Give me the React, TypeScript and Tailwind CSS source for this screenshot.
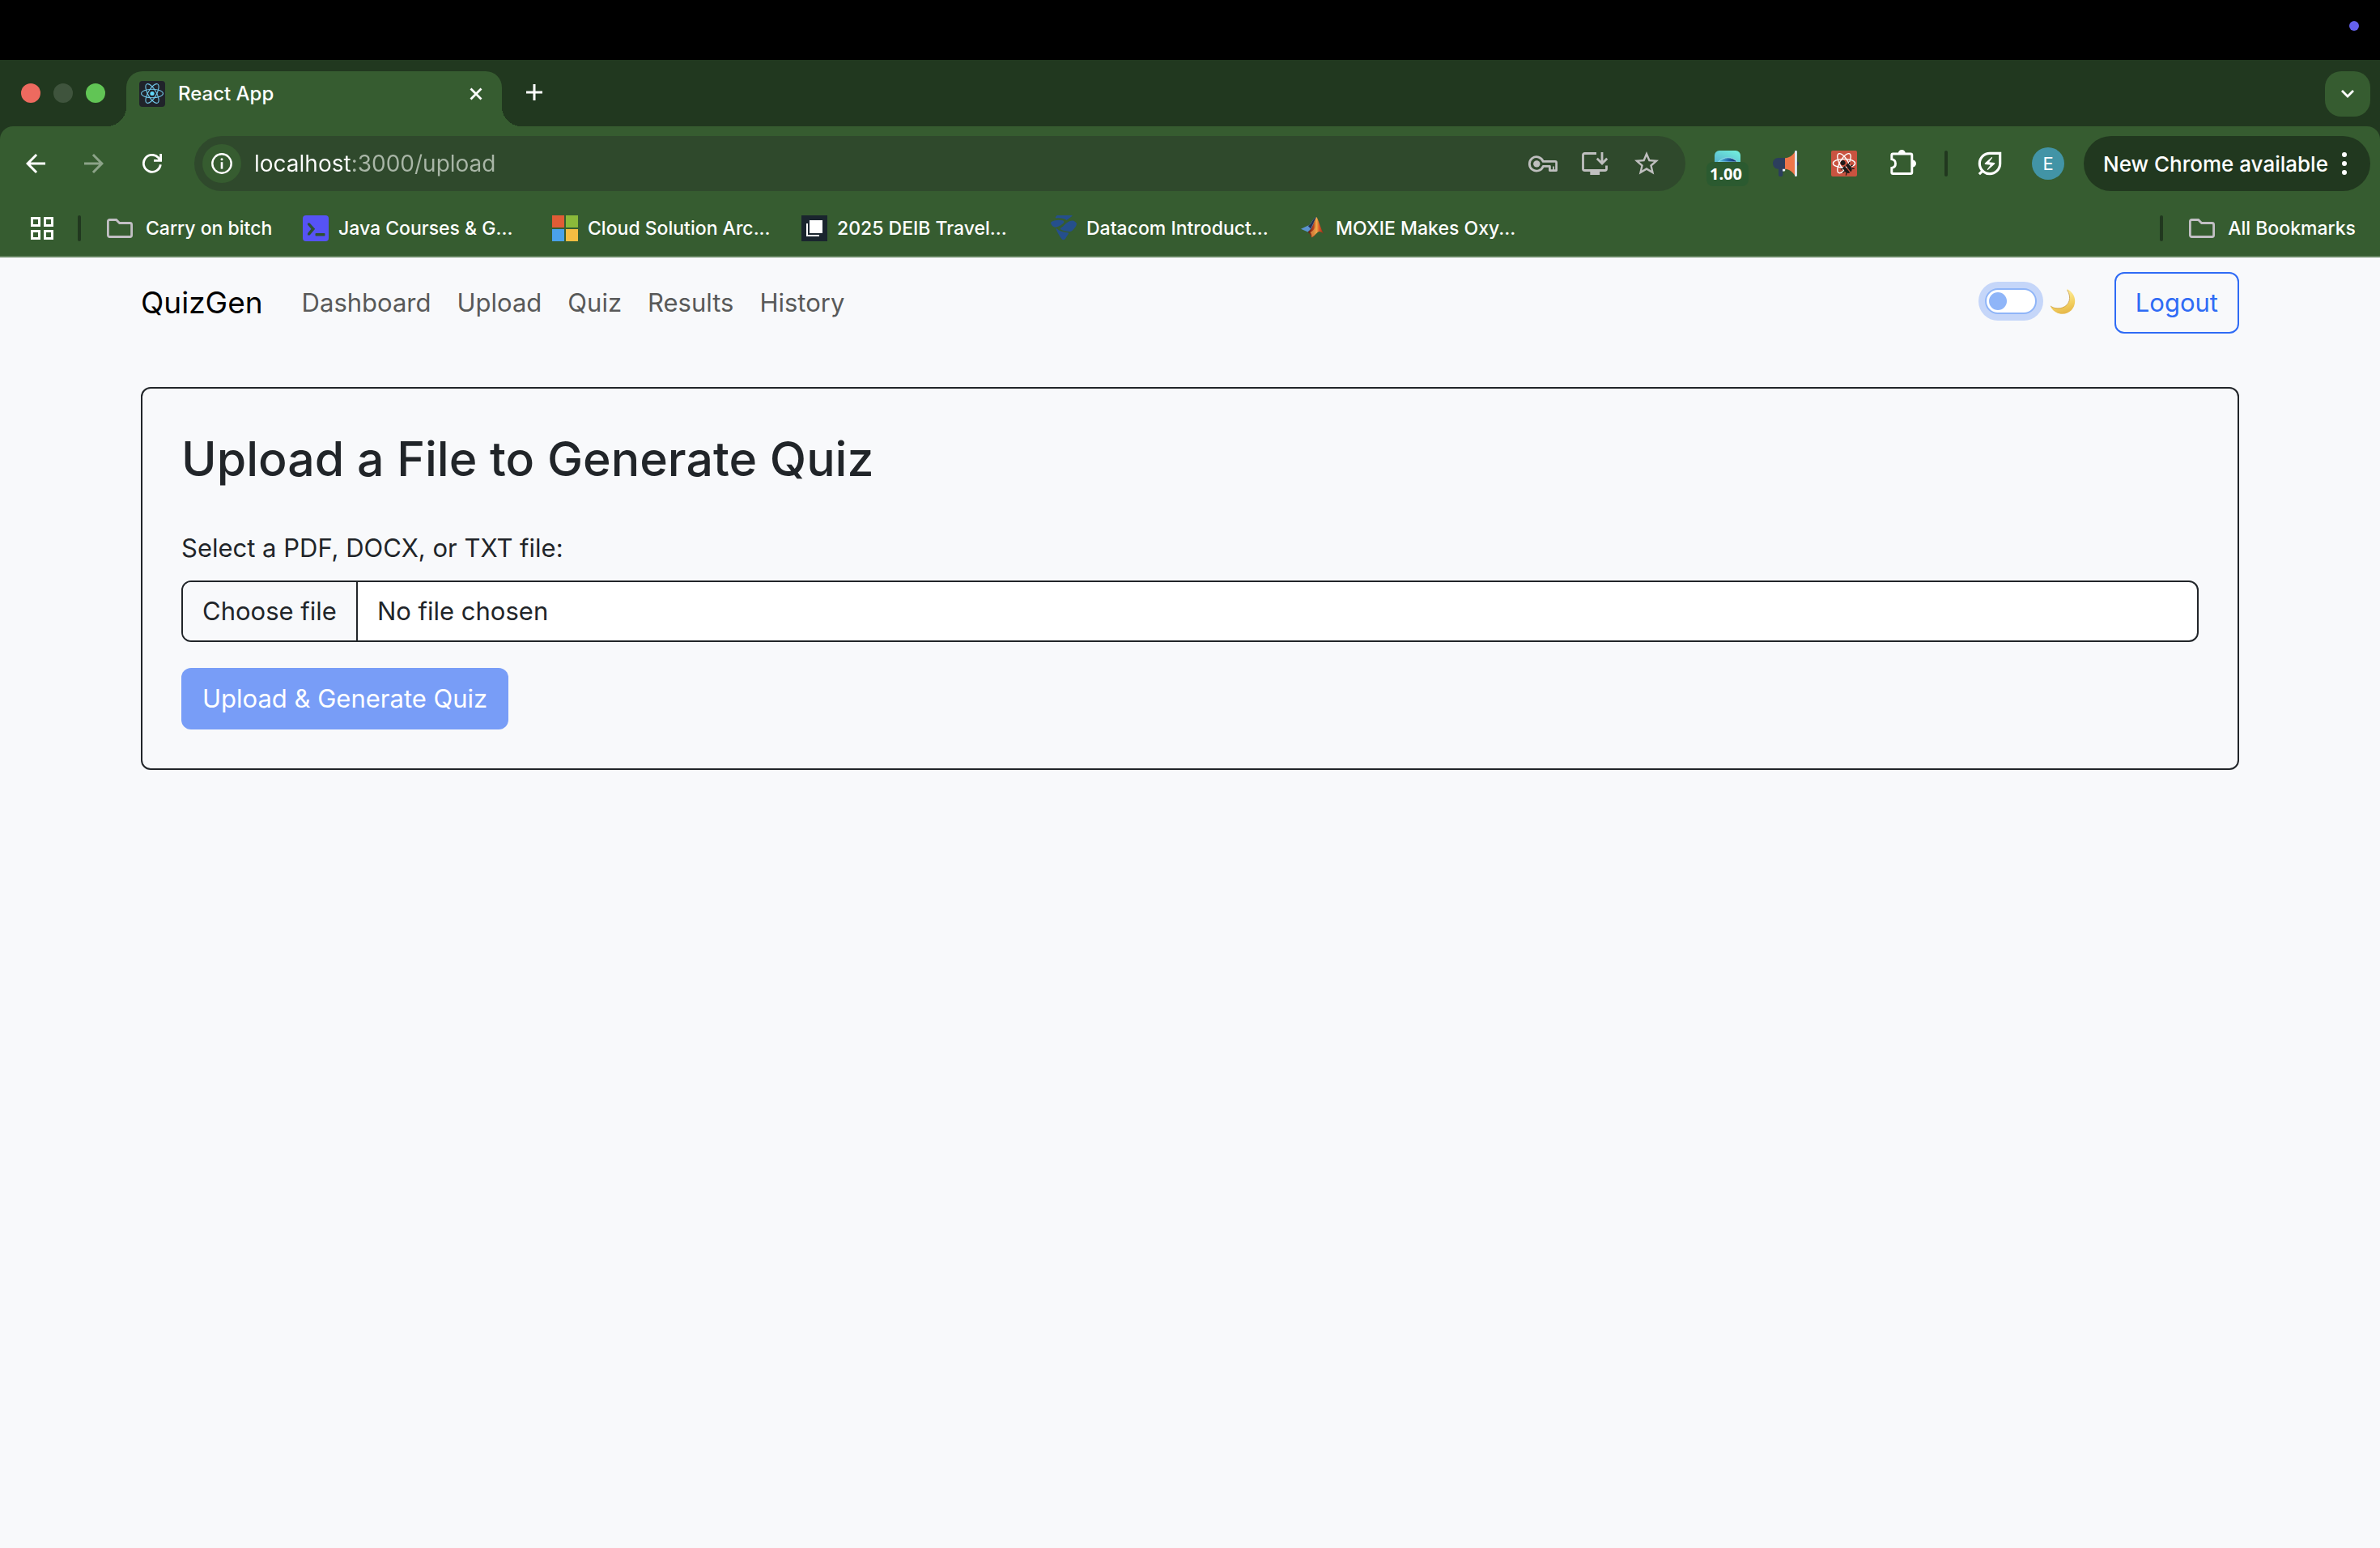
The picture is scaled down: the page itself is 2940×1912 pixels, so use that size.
import React, { useState } from "react";
import {
  MdArrowBack,
  MdArrowForward,
  MdOutlineEnergySavingsLeaf,
  MdStarBorder,
} from "react-icons/md";

function ReactFavicon() {
  return (
    <svg viewBox="0 0 32 32" className="size-8 shrink-0" aria-hidden="true">
      <rect width="32" height="32" rx="4" fill="#20232a" />
      <circle cx="16" cy="15.5" r="2.6" fill="#61dafb" />
      <g fill="none" stroke="#71c7e8" strokeWidth="1.1">
        <ellipse cx="16" cy="15.5" rx="13.4" ry="5.2" />
        <ellipse cx="16" cy="15.5" rx="13.4" ry="5.2" transform="rotate(60 16 15.5)" />
        <ellipse cx="16" cy="15.5" rx="13.4" ry="5.2" transform="rotate(120 16 15.5)" />
      </g>
    </svg>
  );
}

function CloseIcon() {
  return (
    <svg viewBox="0 0 16 16" className="size-4" aria-hidden="true">
      <path d="M1.5 1.5l13 13M14.5 1.5l-13 13" stroke="#fff" strokeWidth="2.8" fill="none" />
    </svg>
  );
}

function PlusIcon() {
  return (
    <svg viewBox="0 0 20 20" className="size-5" aria-hidden="true">
      <path d="M10 0v20M0 10h20" stroke="#fff" strokeWidth="3" fill="none" />
    </svg>
  );
}

function ChevronIcon() {
  return (
    <svg viewBox="0 0 16 10" className="h-2.5 w-4" aria-hidden="true">
      <path d="M1 1l7 7 7-7" stroke="#fff" strokeWidth="2.8" fill="none" />
    </svg>
  );
}

function ReloadIcon() {
  return (
    <svg viewBox="0 0 24 24" className="size-6" aria-hidden="true">
      <path d="M22.3 13.2a10.5 10.5 0 1 1-2.6-8.4l2 2.6" stroke="#fff" strokeWidth="2.8" fill="none" />
      <path d="M22.6 0v8.4H14" stroke="#fff" strokeWidth="2.8" fill="none" />
    </svg>
  );
}

function InfoIcon() {
  return (
    <svg viewBox="0 0 26 26" className="size-[26px]" aria-hidden="true">
      <circle cx="13" cy="13" r="11.7" stroke="#fff" strokeWidth="2.4" fill="none" />
      <circle cx="13" cy="7.8" r="1.5" fill="#fff" />
      <path d="M13 11.2v8.4" stroke="#fff" strokeWidth="2.6" />
    </svg>
  );
}

function KeyIcon() {
  return (
    <svg viewBox="0 0 36 21" className="h-[21px] w-9" aria-hidden="true">
      <g fill="none" stroke="#bfbfbf" strokeWidth="2.8">
        <path d="M18.2 7.4h14.9a1.5 1.5 0 0 1 1.5 1.5v9.7h-8.2v-5.2h-8.2a8.7 8.7 0 1 1 0-6z" strokeLinejoin="round" />
        <path d="M31 13.4v5" strokeWidth="1.8" />
      </g>
      <circle cx="10.3" cy="10.4" r="4.2" fill="#bfbfbf" />
    </svg>
  );
}

function InstallIcon() {
  return (
    <svg viewBox="0 0 32 28" className="h-7 w-8" aria-hidden="true">
      <g fill="none" stroke="#bfbfbf" strokeWidth="2.8">
        <path d="M18 1.5H3.5a2 2 0 0 0-2 2v17a2 2 0 0 0 2 2h25a2 2 0 0 0 2-2V16.5" />
        <path d="M25 0v13M18.8 7.8l6.2 6.2 6.2-6.2" />
      </g>
      <path d="M10.3 23h11.8v5H10.3z" fill="#bfbfbf" />
    </svg>
  );
}

function EyeTile() {
  return (
    <svg viewBox="0 0 32 14" className="h-3.5 w-8" aria-hidden="true">
      <defs>
        <linearGradient id="tile" x1="0" y1="1" x2="1" y2="0">
          <stop offset="0" stopColor="#58b4cf" />
          <stop offset="1" stopColor="#74f3dd" />
        </linearGradient>
        <linearGradient id="iris" x1="0" y1="0" x2="1" y2="0">
          <stop offset="0" stopColor="#5fd0e6" />
          <stop offset="0.55" stopColor="#1f63a8" />
          <stop offset="1" stopColor="#14245c" />
        </linearGradient>
      </defs>
      <path d="M0 14V6a6 6 0 0 1 6-6h20a6 6 0 0 1 6 6v8z" fill="url(#tile)" />
      <path d="M4.500 14C8 10.500 12 8.800 16.500 8.800S25 10.500 28 14z" fill="url(#iris)" stroke="#a8e6ef" strokeWidth="0.8" />
    </svg>
  );
}

function MegaphoneIcon() {
  return (
    <svg viewBox="0 0 32 32" className="size-8" aria-hidden="true">
      <path d="M29.500 13.500c1.600 0 2.500 1.200 2.500 2.600s-.9 2.700-2.500 2.700z" fill="#2c3e5d" />
      <path d="M7 20h5.300v10.200c0 1-.9 1.800-2.600 1.800s-2.700-.8-2.700-1.800z" fill="#2c3e5d" />
      <path d="M12 22h3.200v2.400c0 .8-1 1.200-3.200 1.200z" fill="#e8eef5" />
      <path d="M15.300 9H6.800C2.400 9 0 12.200 0 15.800s2.400 7 6.800 7h8.500z" fill="#2c3e5d" />
      <path d="M15 9.300c5.600-.6 9.400-3.300 12.300-8.100v29.600c-2.900-4.600-6.700-7.500-12.300-8.100z" fill="#ee764a" />
      <rect x="27" y="0" width="2.900" height="32" rx="1.200" fill="#dfe8f2" />
    </svg>
  );
}

function DevtoolsIcon() {
  return (
    <svg viewBox="0 0 32 32" className="size-8" aria-hidden="true">
      <rect width="32" height="32" rx="2" fill="#c95340" />
      <g fill="none" stroke="#fff" strokeWidth="1.400">
        <ellipse cx="16" cy="15.700" rx="13.600" ry="5.300" />
        <ellipse cx="16" cy="15.700" rx="13.600" ry="5.300" transform="rotate(60 16 15.700)" />
        <ellipse cx="16" cy="15.700" rx="13.600" ry="5.300" transform="rotate(120 16 15.700)" />
      </g>
      <path d="M14.500 27.500l6-8 7 5-4 6-8 .5z" fill="#c95340" />
      <g transform="rotate(-38 18 20)" fill="#1d1a19" stroke="#1d1a19">
        <circle cx="18.300" cy="14" r="3" stroke="none" />
        <path d="M14 18.500h3.700v10.500c-2.600-.4-4-2.600-4-5.200zM19.100 18.500h3.700l.3 5.300c0 2.600-1.400 4.800-4 5.200z" stroke="none" />
        <path d="M13.800 20l-2.500-1.500M13.600 23.500h-3M14.200 26.500l-2.400 2M23 20l2.500-1.500M23.200 23.500h3M22.600 26.500l2.400 2" fill="none" strokeWidth="1.300" />
      </g>
    </svg>
  );
}

function PuzzleIcon() {
  return (
    <svg viewBox="0 0 36 36" className="size-9" aria-hidden="true">
      <path
        d="M6.300 6h22a1.500 1.500 0 0 1 1.500 1.500v21.500a1.500 1.500 0 0 1-1.500 1.500h-22A1.500 1.500 0 0 1 4.800 29v-5.600c3-.5 4.700-2.700 4.700-5.400s-1.700-4.900-4.700-5.400V7.500A1.500 1.500 0 0 1 6.300 6z"
        fill="none"
        stroke="#fff"
        strokeWidth="2.900"
      />
      <path d="M12.800 5.500a4.500 4.500 0 0 1 9 0zM30.500 13.500a4.500 4.500 0 0 1 0 9z" fill="#fff" />
    </svg>
  );
}

function AppsIcon() {
  return (
    <svg viewBox="0 0 28 28" className="size-7" aria-hidden="true">
      <path d="M1.500 1.500h9v9h-9zM17.500 1.500h9v9h-9zM1.500 17.500h9v9h-9zM17.500 17.500h9v9h-9z" fill="none" stroke="#fff" strokeWidth="3" />
    </svg>
  );
}

function FolderIcon() {
  return (
    <svg viewBox="0 0 32 24" className="h-6 w-8 shrink-0" aria-hidden="true">
      <path
        d="M3.400 1.500h8.200L15.600 5.500h13a2 2 0 0 1 2 2v13a2 2 0 0 1-2 2H3.400a2 2 0 0 1-2-2v-17a2 2 0 0 1 2-2z"
        fill="none"
        stroke="#c2bfc4"
        strokeWidth="2.800"
      />
    </svg>
  );
}

function JavaIcon() {
  return (
    <svg viewBox="0 0 32 32" className="size-8 shrink-0" aria-hidden="true">
      <rect width="32" height="32" rx="4" fill="#5653f5" />
      <path d="M6 9.500h2.600l6.600 7.300-6.600 7.700H6v-2.300l4.400-5.400L6 11.600z" fill="#2e5230" />
      <rect x="15.500" y="22" width="12" height="3.600" rx="1" fill="#2e5230" />
    </svg>
  );
}

function MicrosoftIcon() {
  return (
    <svg viewBox="0 0 32 32" className="size-8 shrink-0" aria-hidden="true">
      <path d="M0 0h15v15H0z" fill="#e15c36" />
      <path d="M17 0h15v15H17z" fill="#8bb93a" />
      <path d="M0 17h15v15H0z" fill="#4aa1ea" />
      <path d="M17 17h15v15H17z" fill="#f5bd42" />
    </svg>
  );
}

function PagesIcon() {
  return (
    <svg viewBox="0 0 32 32" className="size-8 shrink-0" aria-hidden="true">
      <path d="M0 0h32v32H0z" fill="#1a252e" />
      <path d="M10 6h16v16H10z" fill="#fff" />
      <path d="M7 10v15h15" fill="none" stroke="#fff" strokeWidth="2" />
    </svg>
  );
}

function DatacomIcon() {
  return (
    <svg viewBox="0 0 32 32" className="size-8 shrink-0" aria-hidden="true">
      <g fill="#254f8c">
        <path d="M7.500 0H26c.5 0 .8.500.3.900L19.500 6c-2.500-2.300-7-3.300-12.700-2.600-1 .1-1.400-.6-.9-1.200z" />
        <path d="M.3 8.500C3 6 10 5 14.800 6.300c1.600.5 2 2 1 3.200-1.800 2-6.800 4.900-10 5.200C2.600 15-.8 10.200.3 8.500z" />
        <path d="M27.500 6.400c1.600.2 4.700 2.600 4.500 4.300-.4 3.300-4.700 8-7 9-3 1-9-.4-12.500-2.200-1-.6-.8-1.500.2-2.200C17 13 20 6.300 27.500 6.400z" />
        <path d="M7.200 16.300c3 2.700 8.500 4.700 13.800 5 .9 0 1.200.7.8 1.400l-4 6.500c-1.400 1.600-3.300 1.300-4.400-.2C10.500 25 7.700 20.500 6.600 17c-.2-.7.100-1.200.600-.7z" />
      </g>
    </svg>
  );
}

function MatlabIcon() {
  return (
    <svg viewBox="2 1 32 32" className="size-8 shrink-0" aria-hidden="true">
      <defs>
        <linearGradient id="peak" x1="0" y1="0" x2="1" y2="0">
          <stop offset="0" stopColor="#5d1410" />
          <stop offset="0.35" stopColor="#b5401f" />
          <stop offset="0.55" stopColor="#f0b04a" />
          <stop offset="0.72" stopColor="#dd5a2a" />
          <stop offset="1" stopColor="#8c1f14" />
        </linearGradient>
      </defs>
      <path d="M3 17.800l8.500-4c2-.3 3-2 4.500-4.300 1.600-2.600 3.400-5.400 6-6.500l-5 13-5.500 5.500z" fill="#5b93d0" />
      <path d="M22 3c-2 1-4 3.500-6 7-1.300 2-2.500 3.500-4.200 4l3.200 3.500z" fill="#24304f" />
      <path d="M22.300 3c1.700 1.500 4.700 13 8.700 20.800-2.300-1.800-4.400-3-6-2.600-3 1-5.500 6.400-9 7.400-.6-2.600-1.800-5.400-4.400-7 5-1.700 7-13 10.700-18.600z" fill="url(#peak)" />
      <path d="M14.500 22c1.500 1.500 2 3.800 1.800 6.200 2.500-1.500 4-4.200 6-6.300l.3-10c-2 5-4.500 8.500-8.100 10.100z" fill="#e9a24a" opacity="0.700" />
    </svg>
  );
}

function MoonIcon() {
  return (
    <svg viewBox="0 0 32 32" className="size-8" aria-hidden="true">
      <defs>
        <linearGradient id="moon" x1="0.600" y1="0.200" x2="0.800" y2="1">
          <stop offset="0" stopColor="#fbe58a" />
          <stop offset="0.500" stopColor="#f2cf5f" />
          <stop offset="1" stopColor="#e3b245" />
        </linearGradient>
      </defs>
      <path d="M21 .800c6 2.700 10.200 8.200 10.200 15C31.200 25 24.500 31.800 15.700 31.800 9 31.800 3 28 .6 21.500c3.600 3.200 9.400 4.300 15 2.500 9.400-3 12.400-13.600 5.400-23.200z" fill="url(#moon)" />
      <path d="M1.200 22.100c4 2.900 9.300 3.600 14.500 1.900 8.600-2.900 11.700-12.500 6-21.800" fill="none" stroke="#c99a3c" strokeWidth="0.800" />
    </svg>
  );
}

const navLinks = ["Dashboard", "Upload", "Quiz", "Results", "History"];

const bookmarks = [
  { label: "Java Courses & G...", icon: <JavaIcon /> },
  { label: "Cloud Solution Arc...", icon: <MicrosoftIcon /> },
  { label: "2025 DEIB Travel...", icon: <PagesIcon /> },
  { label: "Datacom Introduct...", icon: <DatacomIcon /> },
  { label: "MOXIE Makes Oxy...", icon: <MatlabIcon /> },
];

function ToolCell({ label, children }: { label: string; children: React.ReactNode }) {
  return (
    <button type="button" aria-label={label} className="flex h-14 w-[72px] shrink-0 items-center justify-center">
      {children}
    </button>
  );
}

function TabStrip() {
  return (
    <div className="flex h-[82px] items-end bg-[#21381f] pr-3 pl-[26px]">
      <div className="mb-[29px] flex gap-4">
        <button type="button" aria-label="Close window" className="size-6 rounded-full bg-[#ed6a5f]" />
        <button type="button" aria-label="Minimise window" className="size-6 rounded-full bg-[#3f543d]" />
        <button type="button" aria-label="Zoom window" className="size-6 rounded-full bg-[#61c555]" />
      </div>
      <div className="relative ml-[26px] flex h-[68px] w-[464px] items-center rounded-t-[20px] bg-[#365c30] pr-6 pb-3 pl-4">
        <span className="absolute bottom-0 -left-6 size-6 bg-[radial-gradient(circle_at_0_0,transparent_24px,#365c30_24px)]" />
        <span className="absolute -right-6 bottom-0 size-6 bg-[radial-gradient(circle_at_100%_0,transparent_24px,#365c30_24px)]" />
        <ReactFavicon />
        <span className="ml-4 flex-1 text-[24px] font-medium text-white">React App</span>
        <button type="button" aria-label="Close tab">
          <CloseIcon />
        </button>
      </div>
      <button type="button" aria-label="New tab" className="mb-8 ml-[30px]">
        <PlusIcon />
      </button>
      <button
        type="button"
        aria-label="Search tabs"
        className="mb-3 ml-auto flex size-14 items-center justify-center rounded-[20px] bg-[#365c30]"
      >
        <ChevronIcon />
      </button>
    </div>
  );
}

function Toolbar() {
  const [url, setUrl] = useState("localhost:3000/upload");
  return (
    <div className="flex items-center px-3 pt-3 pl-2">
      <ToolCell label="Back">
        <MdArrowBack className="size-9 text-white" />
      </ToolCell>
      <ToolCell label="Forward">
        <MdArrowForward className="size-9 text-[#8ca388]" />
      </ToolCell>
      <ToolCell label="Reload">
        <ReloadIcon />
      </ToolCell>
      <div className="ml-4 flex h-[68px] flex-1 items-center rounded-full bg-[#2f492c] pr-4 pl-[10px]">
        <button
          type="button"
          aria-label="View site information"
          className="flex size-12 items-center justify-center rounded-full bg-[#365c30]"
        >
          <InfoIcon />
        </button>
        <input
          type="text"
          aria-label="Address"
          value={url}
          onChange={(e) => setUrl(e.target.value)}
          className="ml-4 h-12 flex-1 bg-[linear-gradient(90deg,#ffffff_121px,#a9b6a7_121px)] bg-clip-text text-[28px] text-transparent outline-none"
        />
        <button type="button" aria-label="Passwords" className="flex w-16 justify-center">
          <KeyIcon />
        </button>
        <button type="button" aria-label="Install app" className="flex w-16 justify-center">
          <InstallIcon />
        </button>
        <button type="button" aria-label="Bookmark this page" className="flex w-16 justify-center">
          <MdStarBorder className="size-9 text-[#bfbfbf]" />
        </button>
      </div>
      <div className="ml-4 flex items-center">
        <button
          type="button"
          aria-label="Playback speed 1.00"
          className="relative flex h-8 w-[72px] shrink-0 items-start justify-center"
        >
          <EyeTile />
          <span className="absolute top-[14px] left-[10px] flex h-[30px] w-[52px] items-center justify-center rounded-lg bg-[#2b5a30] pr-1 font-['Noto_Sans',sans-serif] text-[20px] font-bold text-white">
            1.00
          </span>
        </button>
        <ToolCell label="Announcements">
          <MegaphoneIcon />
        </ToolCell>
        <ToolCell label="React Developer Tools">
          <DevtoolsIcon />
        </ToolCell>
        <ToolCell label="Extensions">
          <PuzzleIcon />
        </ToolCell>
        <span className="mx-4 h-8 w-1 rounded-full bg-[#21381f]" />
        <ToolCell label="Energy saver">
          <MdOutlineEnergySavingsLeaf className="size-[38px] text-white" />
        </ToolCell>
        <ToolCell label="Profile">
          <span className="flex size-10 items-center justify-center rounded-full bg-[#4294a6] text-[22px] text-white">E</span>
        </ToolCell>
      </div>
      <button
        type="button"
        className="ml-2 flex h-[68px] w-[354px] items-center justify-between rounded-full bg-[#21381f] pr-[29px] pl-6 text-[26px] font-medium text-white"
      >
        New Chrome available
        <span className="flex flex-col gap-[5px]">
          <span className="size-1.5 rounded-full bg-white" />
          <span className="size-1.5 rounded-full bg-white" />
          <span className="size-1.5 rounded-full bg-white" />
        </span>
      </button>
    </div>
  );
}

function BookmarksBar() {
  return (
    <div className="flex h-20 items-center pt-3 pr-[30px] pl-[38px] text-[23px] font-medium text-white">
      <button type="button" aria-label="Apps">
        <AppsIcon />
      </button>
      <span className="ml-[30px] h-8 w-1 rounded-full bg-[#21381f]" />
      <a href="#" className="ml-8 flex w-[242px] items-center gap-4">
        <FolderIcon />
        <span className="whitespace-nowrap">Carry on bitch</span>
      </a>
      {bookmarks.map((b) => (
        <a key={b.label} href="#" className="flex w-[308px] items-center gap-3">
          {b.icon}
          <span className="whitespace-nowrap">{b.label}</span>
        </a>
      ))}
      <span className="ml-auto h-8 w-1 rounded-full bg-[#21381f]" />
      <a href="#" className="ml-8 flex items-center gap-4">
        <FolderIcon />
        <span className="whitespace-nowrap">All Bookmarks</span>
      </a>
    </div>
  );
}

function UploadCard() {
  const [file, setFile] = useState<File | null>(null);
  return (
    <section className="rounded-xl border-2 border-[#212529] p-12">
      <h2 className="text-[59px] leading-[77px] font-medium">Upload a File to Generate Quiz</h2>
      <form className="mt-12" onSubmit={(e) => e.preventDefault()}>
        <label htmlFor="quiz-file" className="block leading-[48px]">
          Select a PDF, DOCX, or TXT file:
        </label>
        <div className="relative mt-4 flex h-[76px] items-stretch overflow-hidden rounded-xl border-2 border-[#212529] bg-white">
          <span className="flex items-center border-r-2 border-[#212529] bg-[#f8f9fb] px-6">Choose file</span>
          <span className="flex flex-1 items-center px-6">{file ? file.name : "No file chosen"}</span>
          <input
            id="quiz-file"
            type="file"
            accept=".pdf,.docx,.txt"
            onChange={(e) => setFile(e.target.files?.[0] ?? null)}
            className="absolute inset-0 size-full cursor-pointer opacity-0"
          />
        </div>
        <button
          type="submit"
          disabled={!file}
          className="mt-8 h-[76px] rounded-xl bg-[#2f6bf5] px-[26px] text-white disabled:bg-[#789df7]"
        >
          Upload &amp; Generate Quiz
        </button>
      </form>
    </section>
  );
}

export default function App() {
  const [dark, setDark] = useState(false);
  return (
    <div className="flex min-h-screen flex-col bg-[#f8f9fb] font-['Inter',sans-serif]">
      <div className="flex h-[74px] items-start justify-end bg-black pt-[26px] pr-[26px]">
        <span className="size-3 rounded-full bg-[#6461ec]" />
      </div>
      <header className="bg-[#21381f]">
        <TabStrip />
        <div className="rounded-t-2xl border-b-2 border-[#64835f] bg-[#365c30]">
          <Toolbar />
          <BookmarksBar />
        </div>
      </header>

      <div className="mx-auto w-full max-w-[2640px] px-6 text-[31px] text-[#212529]">
        <nav className="flex items-center py-[18px]">
          <a href="#" className="text-[37px] leading-[60px] text-black">
            QuizGen
          </a>
          <div className="ml-12 flex gap-8 text-[#585959]">
            {navLinks.map((l) => (
              <a key={l} href="#">
                {l}
              </a>
            ))}
          </div>
          <label className="mr-12 ml-auto flex items-center gap-4 pb-1">
            <input
              type="checkbox"
              role="switch"
              aria-label="Dark mode"
              checked={dark}
              onChange={(e) => setDark(e.target.checked)}
              className="flex h-8 w-16 appearance-none items-center rounded-full border-2 border-[#8fb5f8] bg-white ring-8 ring-[#c5d6f9] before:ml-[3px] before:size-[22px] before:rounded-full before:bg-[#8fb5f8] checked:before:ml-[35px]"
            />
            <MoonIcon />
          </label>
          <button type="button" className="h-[76px] rounded-xl border-2 border-[#2f6bf5] px-6 text-[#2f6bf5]">
            Logout
          </button>
        </nav>
        <main className="mt-12">
          <UploadCard />
        </main>
      </div>
    </div>
  );
}
